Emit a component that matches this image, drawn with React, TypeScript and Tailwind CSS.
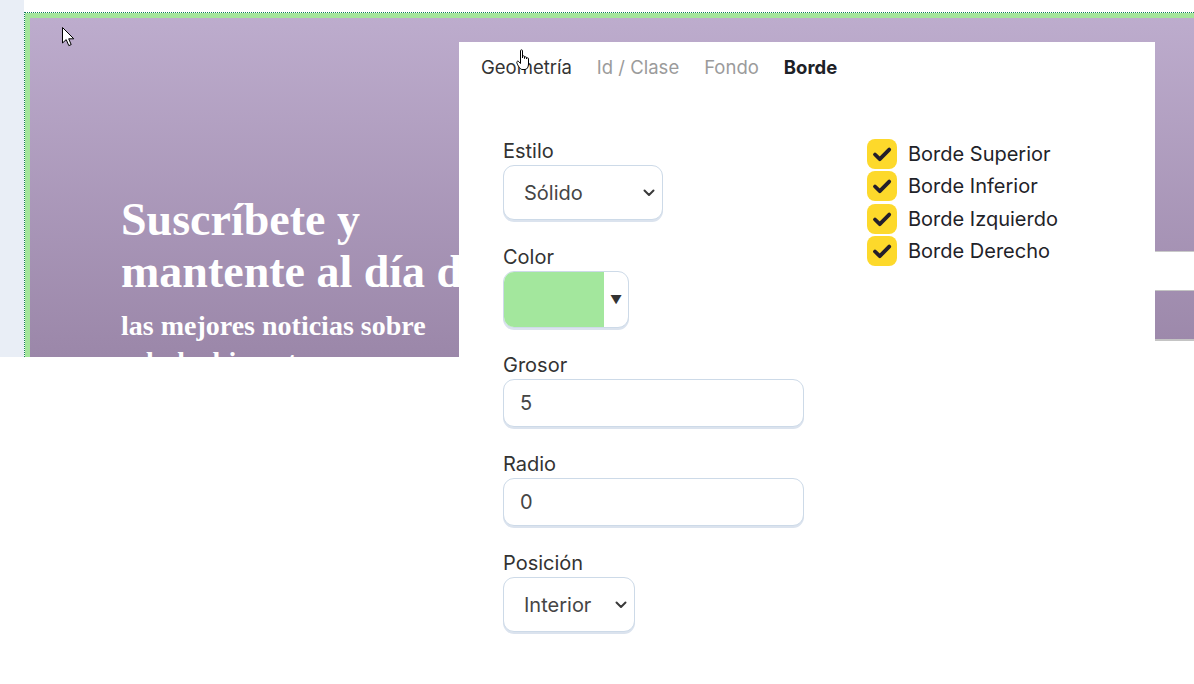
import type { FC } from "react";

const inter = { fontFamily: "Inter, 'Noto Sans', sans-serif" };
const serif = { fontFamily: "'Liberation Serif', 'DejaVu Serif', serif" };

const Chevron: FC = () => (
  <svg width="12" height="8" viewBox="0 0 12 8" className="shrink-0">
    <polyline
      points="1.5,1.5 6,6 10.5,1.5"
      fill="none"
      stroke="#3a3a3a"
      strokeWidth="2"
      strokeLinecap="round"
      strokeLinejoin="round"
    />
  </svg>
);

const Check: FC = () => (
  <div className="w-[30px] h-[30px] rounded-[8px] bg-[#fdd92b] flex items-center justify-center shrink-0">
    <svg width="30" height="30" viewBox="0 0 30 30">
      <polyline
        points="8,15.5 12.8,20.2 22.2,10.6"
        fill="none"
        stroke="#231e2b"
        strokeWidth="3.8"
        strokeLinecap="round"
        strokeLinejoin="round"
      />
    </svg>
  </div>
);

const fieldBox =
  "border border-[#cddae8] rounded-[11px] bg-white shadow-[0_2px_0_#dbe3ee]";

const Field: FC<{ label: string; children: React.ReactNode; first?: boolean }> = ({
  label,
  children,
  first,
}) => (
  <div className={first ? "" : "mt-[25px]"}>
    <div className="text-[20px] leading-[24px] text-[#333] mb-[2px]">{label}</div>
    {children}
  </div>
);

const ArrowCursor: FC = () => (
  <svg width="13" height="20" viewBox="0 0 13 20" className="absolute left-[62px] top-[27px]">
    <path
      d="M0.5 0.5 L0.5 16 L4.2 12.6 L6.8 18.6 L9.2 17.6 L6.7 11.8 L11.8 11.8 Z"
      fill="#fff"
      stroke="#000"
      strokeWidth="1"
      strokeLinejoin="round"
    />
  </svg>
);

const HandCursor: FC = () => (
  <svg width="16" height="22" viewBox="0 0 16 22" className="absolute left-[516px] top-[49px]">
    <path
      d="M4.5 1.5 C4.5 0.6 6.5 0.6 6.5 1.5 L6.5 9 L6.5 7.5 C6.5 6.6 8.5 6.6 8.5 7.5 L8.5 9.5 L8.5 8.5 C8.5 7.6 10.5 7.6 10.5 8.5 L10.5 10 L10.5 9.5 C10.5 8.6 12.5 8.6 12.5 9.5 L12.5 15 C12.5 18 11 20.5 9 20.5 L6 20.5 C4 20.5 1 15 0.8 13.5 C0.6 12.2 2 11.6 3 12.8 L4.5 14.5 Z"
      fill="#fff"
      stroke="#000"
      strokeWidth="1"
      strokeLinejoin="round"
    />
  </svg>
);

export default function App() {
  const tabs = [
    { name: "Geometría", cls: "text-[#333]" },
    { name: "Id / Clase", cls: "text-[#9b9b9b]" },
    { name: "Fondo", cls: "text-[#9b9b9b]" },
    { name: "Borde", cls: "text-[#1d2127] font-bold" },
  ];
  const sides = ["Borde Superior", "Borde Inferior", "Borde Izquierdo", "Borde Derecho"];

  return (
    <div className="relative w-[1194px] h-[684px] bg-white overflow-hidden" style={inter}>
      {/* editor canvas */}
      <div className="flex h-[357px]">
        <div className="w-[24px] bg-[#e9eef6] shrink-0" />
        <div className="flex-1 flex flex-col min-w-0">
          <div className="h-[12px] bg-white" />
          <div className="flex-1 flex border-t border-l border-dotted border-[#137a5c] overflow-hidden">
            <div className="flex-1 flex border-t-[5px] border-l-[5px] border-[#a4e59c]">
              <div className="flex-1 flex bg-gradient-to-b from-[#bdaccd] to-[#9b87a9]">
                <div className="flex-1 pl-[91px] pt-[176px]" style={serif}>
                  <h1 className="text-[46px] leading-[52px] font-bold text-white">
                    Suscríbete y
                    <br />
                    mantente al día de
                  </h1>
                  <p className="mt-[10px] text-[28px] leading-[36px] font-bold text-white">
                    las mejores noticias sobre
                    <br />
                    salud y bienestar
                  </p>
                </div>
                <div className="w-[120px] shrink-0 flex flex-col pt-[233px]">
                  <div className="h-[39px] bg-white border-t border-[#c9c9c9]" />
                  <div className="h-[51px] border-t border-b-2 border-[#c4c4c4]" />
                  <div className="flex-1 bg-white" />
                </div>
              </div>
            </div>
          </div>
        </div>
      </div>

      <ArrowCursor />

      {/* properties panel */}
      <div className="absolute left-[459px] top-[42px] w-[696px] h-[642px] bg-white pl-[22px] pt-[12px]">
        <div className="flex gap-[25px] text-[18.5px] leading-[26px]">
          {tabs.map((t) => (
            <span key={t.name} className={t.cls}>
              {t.name}
            </span>
          ))}
        </div>

        <div className="flex pl-[22px] pt-[59px]">
          <div className="w-[301px] shrink-0">
            <Field label="Estilo" first>
              <div className={`${fieldBox} w-[160px] h-[55px] flex items-center justify-between pl-[20px] pr-[7px]`}>
                <span className="text-[20px] text-[#454545]">Sólido</span>
                <Chevron />
              </div>
            </Field>
            <Field label="Color">
              <div className={`${fieldBox} w-[126px] h-[57px] flex overflow-hidden`}>
                <div className="w-[100px] bg-[#a3e79d]" />
                <div className="flex-1 flex items-center justify-center text-[12px] text-[#333]">▼</div>
              </div>
            </Field>
            <Field label="Grosor">
              <div className={`${fieldBox} w-[301px] h-[48px] flex items-center pl-[16px] text-[20px] text-[#454545]`}>
                5
              </div>
            </Field>
            <Field label="Radio">
              <div className={`${fieldBox} w-[301px] h-[48px] flex items-center pl-[16px] text-[20px] text-[#454545]`}>
                0
              </div>
            </Field>
            <Field label="Posición">
              <div className={`${fieldBox} w-[132px] h-[55px] flex items-center justify-between pl-[20px] pr-[7px]`}>
                <span className="text-[20px] text-[#454545]">Interior</span>
                <Chevron />
              </div>
            </Field>
          </div>

          <div className="ml-[63px] flex flex-col gap-[2.4px]">
            {sides.map((s) => (
              <div key={s} className="flex items-center gap-[11px]">
                <Check />
                <span className="text-[20px] text-[#1f2329]">{s}</span>
              </div>
            ))}
          </div>
        </div>
      </div>

      <HandCursor />
    </div>
  );
}
